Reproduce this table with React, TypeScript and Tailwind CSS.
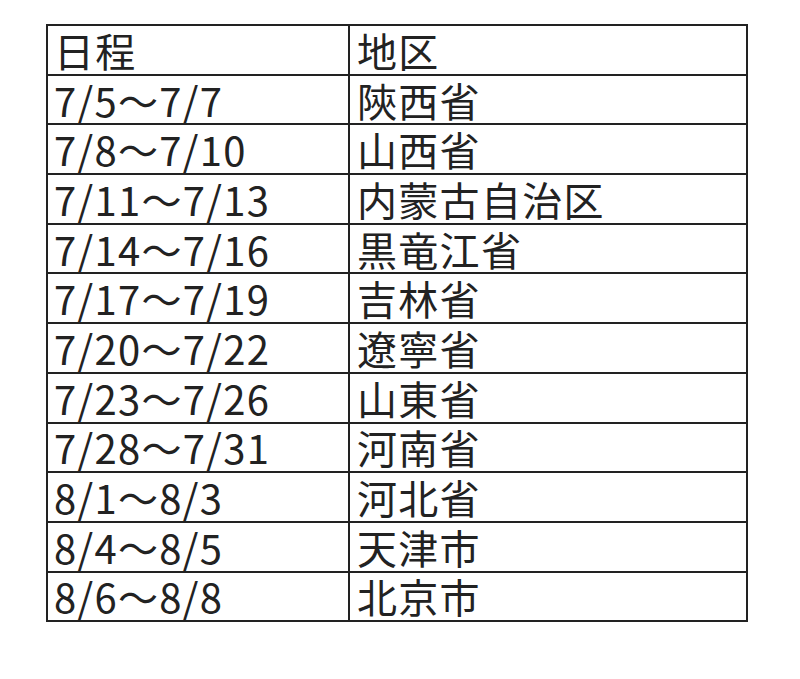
const rows: [string, string][] = [
    ['7/5～7/7', '陝西省'],
    ['7/8～7/10', '山西省'],
    ['7/11～7/13', '内蒙古自治区'],
    ['7/14～7/16', '黒竜江省'],
    ['7/17～7/19', '吉林省'],
    ['7/20～7/22', '遼寧省'],
    ['7/23～7/26', '山東省'],
    ['7/28～7/31', '河南省'],
    ['8/1～8/3', '河北省'],
    ['8/4～8/5', '天津市'],
    ['8/6～8/8', '北京市'],
]

function Cell({ text, pad }: { text: string; pad: string }) {
    return (
        <td className={`border-2 border-[#222] align-middle ${pad}`}>
            <div className="h-[40px] leading-[40px] whitespace-nowrap">{text}</div>
        </td>
    )
}

export default function App() {
    return (
        <div className="w-[800px] h-[679px] bg-white pt-[24px] pl-[46px]">
            <table className="w-[700px] table-fixed border-collapse text-[40px] tracking-[1.3px] text-[#222] font-['Noto_Sans_CJK_JP',sans-serif]">
                <colgroup>
                    <col className="w-[302px]" />
                    <col className="w-[398px]" />
                </colgroup>
                <tbody>
                    <tr className="h-[49.7px]">
                        <Cell text="日程" pad="pl-[6px]" />
                        <Cell text="地区" pad="pl-[7px]" />
                    </tr>
                    {rows.map(([date, area]) => (
                        <tr key={date} className="h-[49.7px]">
                            <Cell text={date} pad="pl-[6px]" />
                            <Cell text={area} pad="pl-[7px]" />
                        </tr>
                    ))}
                </tbody>
            </table>
        </div>
    )
}
